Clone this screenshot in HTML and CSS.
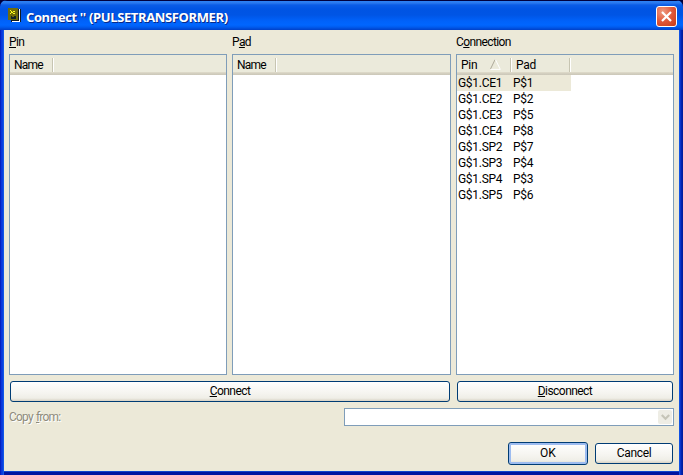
FILE: index.html
```html
<!DOCTYPE html>
<html lang="en">
<head>
<meta charset="utf-8">
<title>Connect</title>
<link rel="stylesheet" href="styles.css">
</head>
<body>
<div class="window">
  <header class="titlebar">
    <svg class="app-icon" width="13" height="14" viewBox="0 0 13 14" shape-rendering="crispEdges">
      <path d="M2 1h11v13H3z" fill="#111a20"/>
      <path d="M11 1h1v12h-1zM4 13h8v1H4z" fill="#fff"/>
      <path d="M0 0h10v12H0z" fill="#706c08"/>
      <path d="M2 2h1v1h1v1h1v-1h2v1H5v1h2v1H5V5H3v1H2V5h1V3H2z" fill="#ffff20"/>
      <path d="M3 8h5v3H3z" fill="#14252a"/><path d="M4 8h2v1H4z" fill="#706c08"/>
    </svg>
    <h1 class="title">Connect '' (PULSETRANSFORMER)</h1>
    <button class="close" aria-label="Close">
      <svg width="19" height="19" viewBox="0 0 19 19"><path d="M5 5l9 9M14 5l-9 9" stroke="#fff" stroke-width="2.2"/></svg>
    </button>
  </header>
  <main class="content">
    <div class="lists">
      <section class="group">
        <label class="caption"><u>P</u>in</label>
        <div class="list">
          <div class="head"><span class="col name">Name</span></div>
        </div>
      </section>
      <section class="group">
        <label class="caption">P<u>a</u>d</label>
        <div class="list">
          <div class="head"><span class="col name">Name</span></div>
        </div>
      </section>
      <section class="group">
        <label class="caption">C<u>o</u>nnection</label>
        <div class="list">
          <div class="head">
            <span class="col pin">Pin
              <svg class="sort" width="11" height="11" viewBox="0 0 11 11"><path d="M.5 10L5 .7" stroke="#aca899" fill="none"/><path d="M5.5 .7L10.3 10.4H.5" stroke="#fff" fill="none"/></svg>
            </span>
            <span class="col pad">Pad</span>
          </div>
          <div class="row selected"><span>G$1.CE1</span><span>P$1</span></div>
          <div class="row"><span>G$1.CE2</span><span>P$2</span></div>
          <div class="row"><span>G$1.CE3</span><span>P$5</span></div>
          <div class="row"><span>G$1.CE4</span><span>P$8</span></div>
          <div class="row"><span>G$1.SP2</span><span>P$7</span></div>
          <div class="row"><span>G$1.SP3</span><span>P$4</span></div>
          <div class="row"><span>G$1.SP4</span><span>P$3</span></div>
          <div class="row"><span>G$1.SP5</span><span>P$6</span></div>
        </div>
      </section>
    </div>
    <div class="actions">
      <button class="btn"><span><u>C</u>onnect</span></button>
      <button class="btn"><span><u>D</u>isconnect</span></button>
    </div>
    <div class="copy">
      <label class="disabled">Copy <u>f</u>rom:</label>
      <div class="combo">
        <span class="drop"><svg width="9" height="7" viewBox="0 0 9 7"><path d="M.8 1L4.5 4.7L8.2 1" fill="none" stroke="#c6c5b8" stroke-width="2.2"/></svg></span>
      </div>
    </div>
    <footer class="footer">
      <button class="btn default"><span>OK</span></button>
      <button class="btn cancel"><span>Cancel</span></button>
    </footer>
  </main>
</div>
</body>
</html>
```

FILE: styles.css
```css
* { box-sizing: border-box; }
body {
  margin: 0;
  background: #00003c;
  font: 12px/13px Roboto, "Liberation Sans", sans-serif;
  letter-spacing: -0.3px;
  color: #000;
  overflow: hidden;
}
u { text-decoration: underline; text-underline-offset: 1px; text-decoration-thickness: 1px; text-decoration-skip-ink: none; }
.window {
  width: 683px;
  height: 475px;
  border-radius: 7px 7px 0 0;
  overflow: hidden;
  background: linear-gradient(90deg, #0010a8 0, #0831d9 1px, #0c44e0 3px, #166aee 4px, #166aee 679px, #0c3ad8 680px, #001ea0 682px);
  display: flex;
  flex-direction: column;
}
.titlebar {
  height: 30px;
  flex: none;
  display: flex;
  align-items: center;
  padding: 3px 6px 0 8px;
  background: linear-gradient(#00003c 0, #00003c 1px, #2b82f5 1px, #2a78ee 3px, #0a5ce6 5px, #0054e3 9px, #0055e5 15px, #0062fa 21px, #0066ff 25px, #005cf0 27px, #0040c8 30px);
}
.app-icon { margin-top: -3px; }
.title {
  margin: 0 auto 0 5px;
  font: bold 13px/18px "Open Sans", "Noto Sans", sans-serif;
  letter-spacing: -0.38px;
  color: #fff;
  text-shadow: 1px 1px #0a2a88;
  white-space: nowrap;
}
.close {
  width: 21px;
  height: 21px;
  padding: 0;
  border: 1px solid #fff;
  border-radius: 3px;
  background: radial-gradient(circle at 30% 25%, #ee9a80, #e0583a 50%, #c83a14);
}
.close svg { display: block; }
.content {
  flex: 1;
  margin: 0 4px 4px;
  padding: 6px 5px;
  background: #ece9d8;
  box-shadow: 0 1px #1244cc, 0 4px #0014a0;
  display: flex;
  flex-direction: column;
}
.lists {
  display: grid;
  grid-template-columns: 218px 219px 218px;
  gap: 5px;
}
.caption { display: block; height: 18px; letter-spacing: -0.6px; }
.list {
  height: 321px;
  border: 1px solid #7f9db9;
  background: #fff;
}
.head {
  height: 20px;
  display: flex;
  align-items: center;
  background: linear-gradient(#ebeadb 0, #ebeadb 17px, #e2decd 17px, #d6d2c2 18px, #cbc7b8 20px);
}
.col {
  height: 14px;
  line-height: 14px;
  padding-left: 4px;
  border-right: 1px solid #fff;
  box-shadow: inset -1px 0 #c7c5b2;
}
.name { width: 44px; letter-spacing: -0.8px; }
.pin { width: 55px; display: flex; justify-content: space-between; padding-right: 10px; }
.pad { width: 59px; padding-left: 4px; }
.sort { margin-top: 1px; }
.row {
  width: 114px;
  height: 16px;
  padding-left: 1px;
  line-height: 16px;
  display: grid;
  grid-template-columns: 55px 1fr;
}
.selected { background: #ece9d8; }
.btn {
  padding: 0;
  border: 1px solid #003c74;
  border-radius: 3px;
  background: linear-gradient(#fff, #f5f4ef 60%, #efeee7 85%, #d8d2c4);
  font: inherit;
  letter-spacing: -0.55px;
  color: inherit;
}
.actions {
  display: grid;
  grid-template-columns: 440px 216px;
  gap: 7px;
  height: 21px;
  margin: 6px 1px 0;
}
.copy {
  display: flex;
  justify-content: space-between;
  align-items: center;
  height: 18px;
  margin-top: 6px;
}
.disabled { color: #8e8b7c; text-shadow: 1px 1px #fff; letter-spacing: -0.8px; word-spacing: 1px; }
.combo {
  width: 330px;
  height: 18px;
  border: 1px solid #7f9db9;
  background: #fff;
  display: flex;
  justify-content: flex-end;
  padding: 1px;
}
.drop {
  width: 14px;
  display: flex;
  align-items: center;
  justify-content: center;
  border-radius: 2px;
  background: #eeede5;
}
.footer {
  display: flex;
  align-items: center;
  justify-content: flex-end;
  gap: 7px;
  height: 23px;
  margin: 16px 1px 0;
}
.default { width: 80px; height: 23px; box-shadow: inset 0 0 0 2px #9dbcf0; letter-spacing: 0; }
.cancel { width: 78px; height: 21px; letter-spacing: -0.35px; }
```
